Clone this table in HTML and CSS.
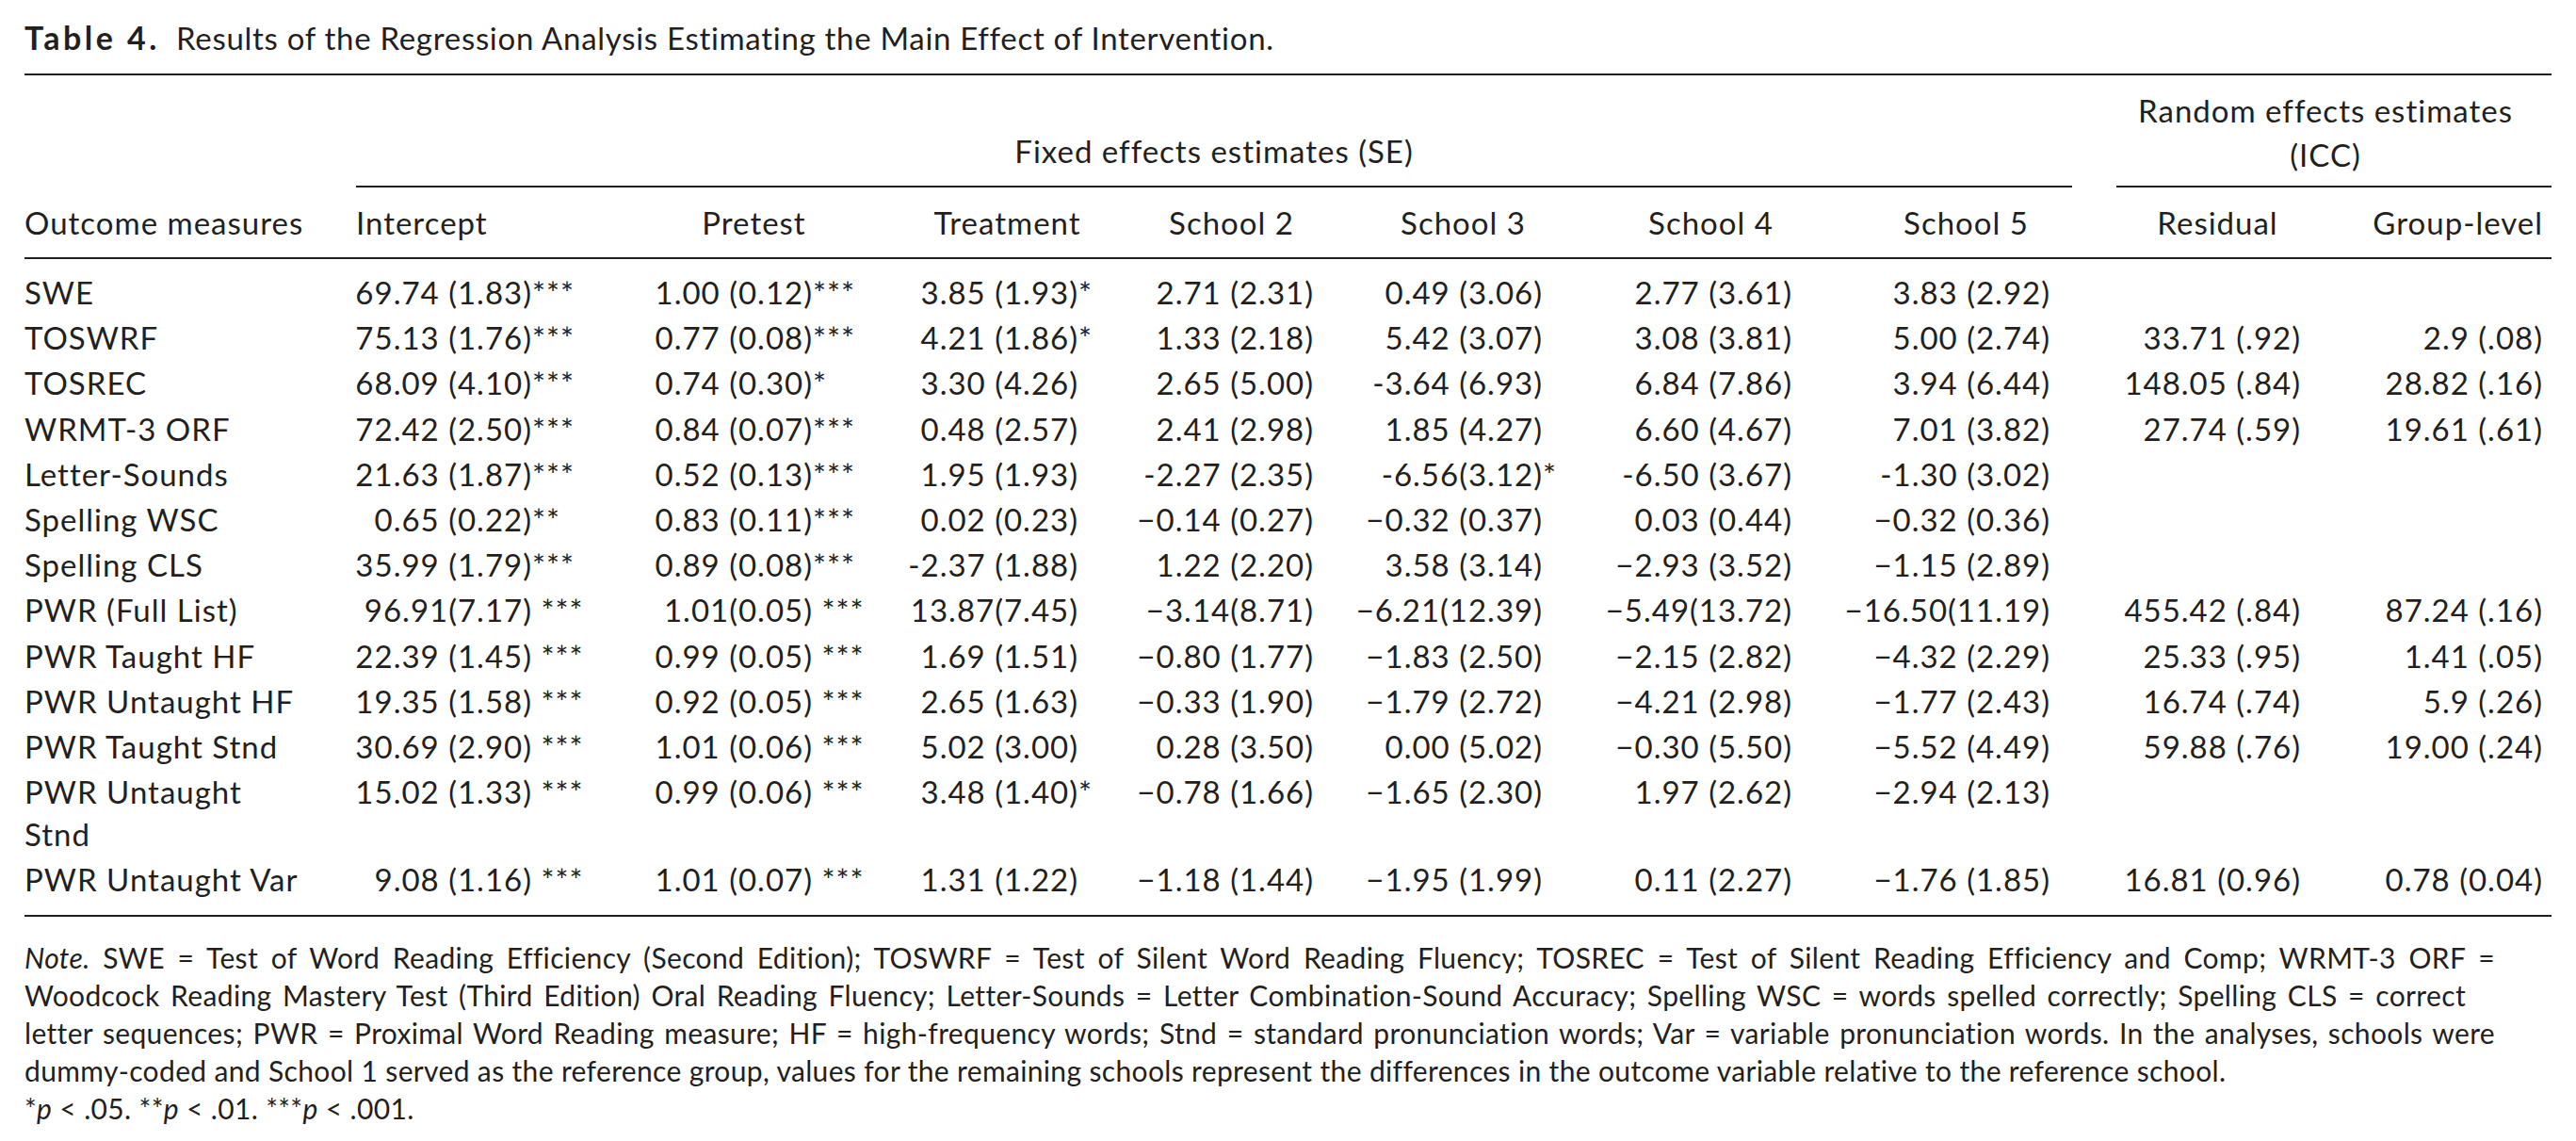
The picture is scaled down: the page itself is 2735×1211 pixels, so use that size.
FILE: index.html
```html
<!DOCTYPE html>
<html lang="en">
<head>
<meta charset="utf-8">
<title>Table 4. Results of the Regression Analysis</title>
<link rel="stylesheet" href="styles.css">
</head>
<body>
<main class="page">
  <p class="caption"><b class="caption-label">Table 4.</b> Results of the Regression Analysis Estimating the Main Effect of Intervention.</p>
  <table class="results">
    <colgroup>
      <col class="c-outcome">
      <col class="c-int">
      <col class="c-pre">
      <col class="c-treat">
      <col class="c-s2">
      <col class="c-s3">
      <col class="c-s4">
      <col class="c-s5">
      <col class="c-res">
      <col class="c-grp">
    </colgroup>
    <thead>
      <tr class="spanners">
        <th></th>
        <th colspan="7"><div class="span-fixed">Fixed effects estimates (SE)</div></th>
        <th colspan="2"><div class="span-random">Random effects estimates<br>(ICC)</div></th>
      </tr>
      <tr class="heads">
        <th>Outcome measures</th>
        <th>Intercept</th>
        <th>Pretest</th>
        <th>Treatment</th>
        <th>School 2</th>
        <th>School 3</th>
        <th>School 4</th>
        <th>School 5</th>
        <th>Residual</th>
        <th>Group-level</th>
      </tr>
    </thead>
    <tbody>
      <tr>
        <th>SWE</th>
        <td>69.74 (1.83)<span class="sig">***</span></td>
        <td>1.00 (0.12)<span class="sig">***</span></td>
        <td>3.85 (1.93)<span class="sig">*</span></td>
        <td>2.71 (2.31)</td>
        <td>0.49 (3.06)</td>
        <td>2.77 (3.61)</td>
        <td>3.83 (2.92)</td>
        <td></td>
        <td></td>
      </tr>
      <tr>
        <th>TOSWRF</th>
        <td>75.13 (1.76)<span class="sig">***</span></td>
        <td>0.77 (0.08)<span class="sig">***</span></td>
        <td>4.21 (1.86)<span class="sig">*</span></td>
        <td>1.33 (2.18)</td>
        <td>5.42 (3.07)</td>
        <td>3.08 (3.81)</td>
        <td>5.00 (2.74)</td>
        <td>33.71 (.92)</td>
        <td>2.9 (.08)</td>
      </tr>
      <tr>
        <th>TOSREC</th>
        <td>68.09 (4.10)<span class="sig">***</span></td>
        <td>0.74 (0.30)<span class="sig">*</span></td>
        <td>3.30 (4.26)</td>
        <td>2.65 (5.00)</td>
        <td>-3.64 (6.93)</td>
        <td>6.84 (7.86)</td>
        <td>3.94 (6.44)</td>
        <td>148.05 (.84)</td>
        <td>28.82 (.16)</td>
      </tr>
      <tr>
        <th>WRMT-3 ORF</th>
        <td>72.42 (2.50)<span class="sig">***</span></td>
        <td>0.84 (0.07)<span class="sig">***</span></td>
        <td>0.48 (2.57)</td>
        <td>2.41 (2.98)</td>
        <td>1.85 (4.27)</td>
        <td>6.60 (4.67)</td>
        <td>7.01 (3.82)</td>
        <td>27.74 (.59)</td>
        <td>19.61 (.61)</td>
      </tr>
      <tr>
        <th>Letter-Sounds</th>
        <td>21.63 (1.87)<span class="sig">***</span></td>
        <td>0.52 (0.13)<span class="sig">***</span></td>
        <td>1.95 (1.93)</td>
        <td>-2.27 (2.35)</td>
        <td>-6.56(3.12)<span class="sig">*</span></td>
        <td>-6.50 (3.67)</td>
        <td>-1.30 (3.02)</td>
        <td></td>
        <td></td>
      </tr>
      <tr>
        <th>Spelling WSC</th>
        <td>0.65 (0.22)<span class="sig">**</span></td>
        <td>0.83 (0.11)<span class="sig">***</span></td>
        <td>0.02 (0.23)</td>
        <td>−0.14 (0.27)</td>
        <td>−0.32 (0.37)</td>
        <td>0.03 (0.44)</td>
        <td>−0.32 (0.36)</td>
        <td></td>
        <td></td>
      </tr>
      <tr>
        <th>Spelling CLS</th>
        <td>35.99 (1.79)<span class="sig">***</span></td>
        <td>0.89 (0.08)<span class="sig">***</span></td>
        <td>-2.37 (1.88)</td>
        <td>1.22 (2.20)</td>
        <td>3.58 (3.14)</td>
        <td>−2.93 (3.52)</td>
        <td>−1.15 (2.89)</td>
        <td></td>
        <td></td>
      </tr>
      <tr>
        <th>PWR (Full List)</th>
        <td>96.91(7.17)<span class="sig">&nbsp;***</span></td>
        <td>1.01(0.05)<span class="sig">&nbsp;***</span></td>
        <td>13.87(7.45)</td>
        <td>−3.14(8.71)</td>
        <td>−6.21(12.39)</td>
        <td>−5.49(13.72)</td>
        <td>−16.50(11.19)</td>
        <td>455.42 (.84)</td>
        <td>87.24 (.16)</td>
      </tr>
      <tr>
        <th>PWR Taught HF</th>
        <td>22.39 (1.45)<span class="sig">&nbsp;***</span></td>
        <td>0.99 (0.05)<span class="sig">&nbsp;***</span></td>
        <td>1.69 (1.51)</td>
        <td>−0.80 (1.77)</td>
        <td>−1.83 (2.50)</td>
        <td>−2.15 (2.82)</td>
        <td>−4.32 (2.29)</td>
        <td>25.33 (.95)</td>
        <td>1.41 (.05)</td>
      </tr>
      <tr>
        <th>PWR Untaught HF</th>
        <td>19.35 (1.58)<span class="sig">&nbsp;***</span></td>
        <td>0.92 (0.05)<span class="sig">&nbsp;***</span></td>
        <td>2.65 (1.63)</td>
        <td>−0.33 (1.90)</td>
        <td>−1.79 (2.72)</td>
        <td>−4.21 (2.98)</td>
        <td>−1.77 (2.43)</td>
        <td>16.74 (.74)</td>
        <td>5.9 (.26)</td>
      </tr>
      <tr>
        <th>PWR Taught Stnd</th>
        <td>30.69 (2.90)<span class="sig">&nbsp;***</span></td>
        <td>1.01 (0.06)<span class="sig">&nbsp;***</span></td>
        <td>5.02 (3.00)</td>
        <td>0.28 (3.50)</td>
        <td>0.00 (5.02)</td>
        <td>−0.30 (5.50)</td>
        <td>−5.52 (4.49)</td>
        <td>59.88 (.76)</td>
        <td>19.00 (.24)</td>
      </tr>
      <tr>
        <th>PWR Untaught<br>Stnd</th>
        <td>15.02 (1.33)<span class="sig">&nbsp;***</span></td>
        <td>0.99 (0.06)<span class="sig">&nbsp;***</span></td>
        <td>3.48 (1.40)<span class="sig">*</span></td>
        <td>−0.78 (1.66)</td>
        <td>−1.65 (2.30)</td>
        <td>1.97 (2.62)</td>
        <td>−2.94 (2.13)</td>
        <td></td>
        <td></td>
      </tr>
      <tr>
        <th>PWR Untaught Var</th>
        <td>9.08 (1.16)<span class="sig">&nbsp;***</span></td>
        <td>1.01 (0.07)<span class="sig">&nbsp;***</span></td>
        <td>1.31 (1.22)</td>
        <td>−1.18 (1.44)</td>
        <td>−1.95 (1.99)</td>
        <td>0.11 (2.27)</td>
        <td>−1.76 (1.85)</td>
        <td>16.81 (0.96)</td>
        <td>0.78 (0.04)</td>
      </tr>
    </tbody>
  </table>
  <div class="note">
    <p class="note-line justified"><i>Note.</i> SWE = Test of Word Reading Efficiency (Second Edition); TOSWRF = Test of Silent Word Reading Fluency; TOSREC = Test of Silent Reading Efficiency and Comp; WRMT-3 ORF =</p>
    <p class="note-line justified narrow">Woodcock Reading Mastery Test (Third Edition) Oral Reading Fluency; Letter-Sounds = Letter Combination-Sound Accuracy; Spelling WSC = words spelled correctly; Spelling CLS = correct</p>
    <p class="note-line justified">letter sequences; PWR = Proximal Word Reading measure; HF = high-frequency words; Stnd = standard pronunciation words; Var = variable pronunciation words. In the analyses, schools were</p>
    <p class="note-line">dummy-coded and School 1 served as the reference group, values for the remaining schools represent the differences in the outcome variable relative to the reference school.</p>
    <p class="note-line">*<i>p</i> &lt; .05. **<i>p</i> &lt; .01. ***<i>p</i> &lt; .001.</p>
  </div>
</main>
</body>
</html>
```

FILE: styles.css
```css
html,
body {
  margin: 0;
  background: #ffffff;
}

body {
  font-family: Lato, "Open Sans", "Liberation Sans", sans-serif;
  color: #231f20;
}

.page {
  width: 2683px;
  padding: 16px 0 0 26px;
}

.caption {
  margin: 0;
  font-size: 33px;
  line-height: 47px;
  letter-spacing: 0.7px;
  white-space: nowrap;
}

.caption-label {
  font-size: 34px;
  font-weight: 700;
  letter-spacing: 3.5px;
  margin-right: 8px;
}

.results {
  margin-top: 14px;
  width: 2683px;
  table-layout: fixed;
  border-collapse: collapse;
  border-top: 2px solid #231f20;
  border-bottom: 2px solid #231f20;
  font-size: 33px;
  letter-spacing: 1px;
}

.c-outcome { width: 344px; }
.c-int { width: 296px; }
.c-pre { width: 269px; }
.c-treat { width: 269px; }
.c-s2 { width: 207px; }
.c-s3 { width: 285px; }
.c-s4 { width: 241px; }
.c-s5 { width: 301px; }
.c-res { width: 233px; }
.c-grp { width: 238px; }

.results th,
.results td {
  padding: 0;
  font-weight: 400;
  white-space: nowrap;
  line-height: 45px;
}

/* spanner row */
.results .spanners th {
  vertical-align: bottom;
  padding-top: 14px;
  line-height: 47px;
  text-align: center;
}

.span-fixed {
  margin: 0 38px 0 8px;
  padding-bottom: 13px;
  border-bottom: 2px solid #231f20;
}

.span-random {
  margin-left: 9px;
  padding: 0 18px 9px 0;
  border-bottom: 2px solid #231f20;
}

/* column heads */
.results .heads th {
  padding-top: 14px;
  padding-bottom: 13px;
  line-height: 47px;
  text-align: center;
  border-bottom: 2px solid #231f20;
}

.results .heads th:first-child {
  text-align: left;
}

.results .heads th:nth-child(2) {
  text-align: left;
  padding-left: 8px;
}

.results .heads th:last-child {
  text-align: right;
  padding-right: 9px;
}

/* body */
.results tbody th {
  text-align: left;
  vertical-align: top;
  white-space: normal;
  padding-top: 1.6px;
  padding-bottom: 1.6px;
}

.results tbody td {
  text-align: right;
  vertical-align: top;
  padding-top: 1.6px;
  padding-bottom: 1.6px;
}

.results tbody tr:first-child th,
.results tbody tr:first-child td {
  padding-top: 13px;
}

.results tbody tr:last-child th,
.results tbody tr:last-child td {
  padding-bottom: 15px;
}

.results tbody td:nth-child(2) { padding-right: 101px; }
.results tbody td:nth-child(3) { padding-right: 72px; }
.results tbody td:nth-child(4) { padding-right: 59px; }
.results tbody td:nth-child(5) { padding-right: 16px; }
.results tbody td:nth-child(6) { padding-right: 58px; }
.results tbody td:nth-child(7) { padding-right: 34px; }
.results tbody td:nth-child(8) { padding-right: 61px; }
.results tbody td:nth-child(9) { padding-right: 28px; }
.results tbody td:nth-child(10) { padding-right: 9px; }

.sig {
  display: inline-block;
  width: 0;
  text-align: left;
  white-space: nowrap;
}

.note {
  margin-top: 23px;
  font-size: 30px;
  line-height: 40px;
  letter-spacing: 0.35px;
}

.note-line {
  margin: 0;
  white-space: nowrap;
}

.note-line.justified {
  width: 2623px;
  white-space: normal;
  text-align: justify;
  text-align-last: justify;
}

.note-line.justified.narrow {
  width: 2592px;
}
```
